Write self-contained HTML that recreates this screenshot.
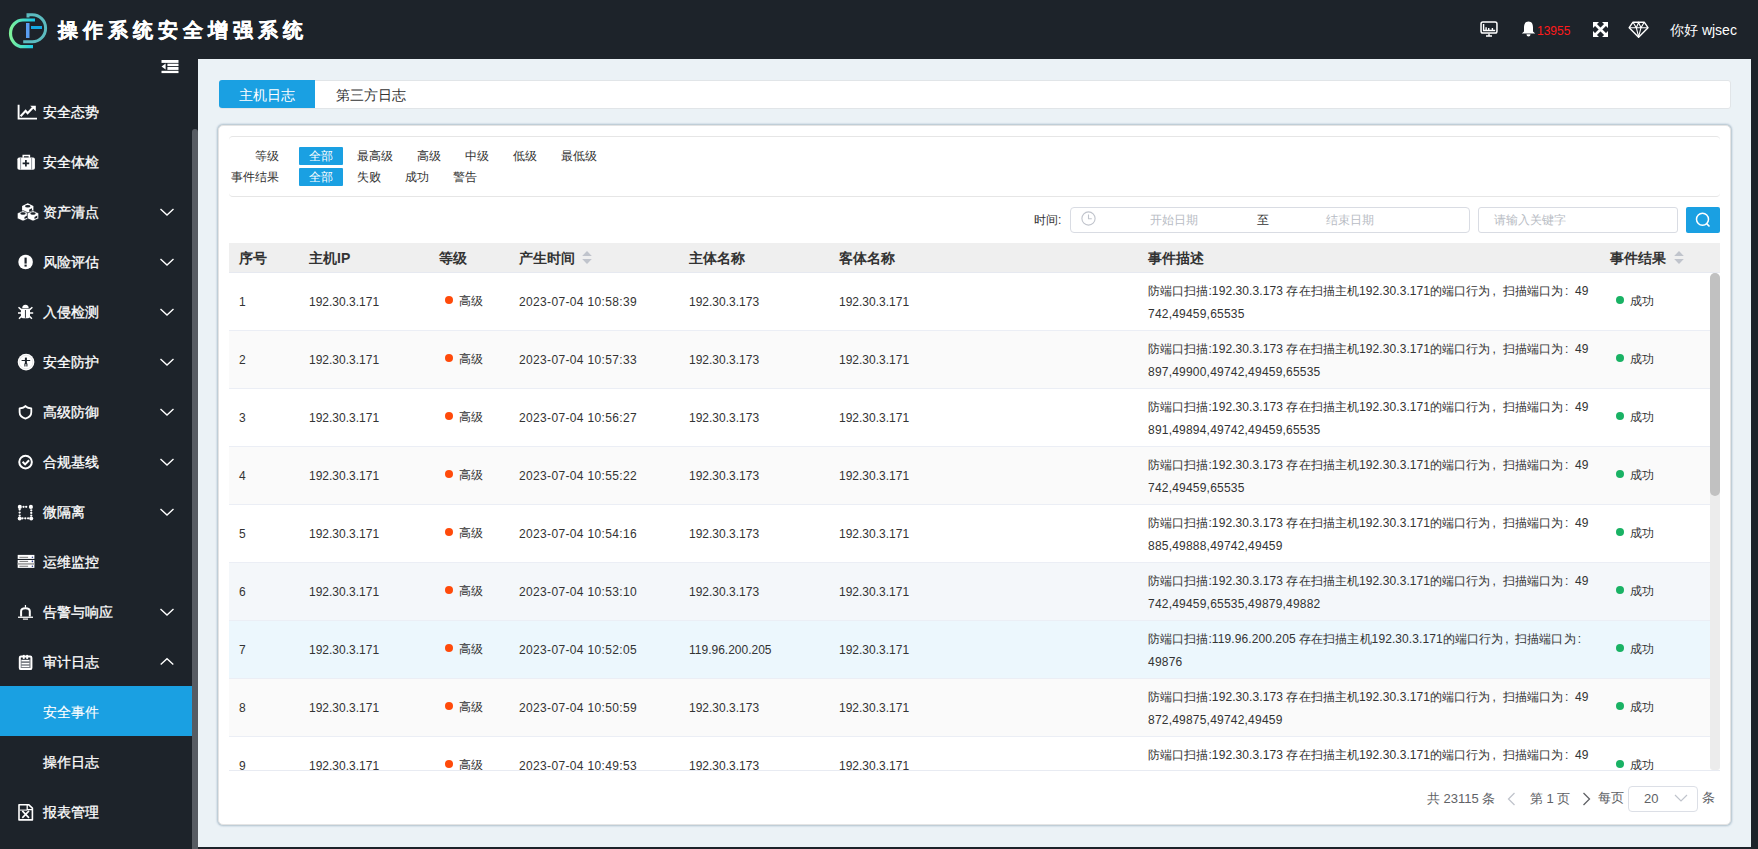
<!DOCTYPE html><html><head><meta charset="utf-8"><style>
*{box-sizing:border-box;margin:0;padding:0}
html,body{width:1758px;height:849px;overflow:hidden;background:#1d232a;font-family:"Liberation Sans",sans-serif;color:#333}
.abs{position:absolute}
#hdr{left:0;top:0;width:1758px;height:59px;background:#1d232a}
#title{left:58px;top:16px;font-size:20px;font-weight:bold;color:#fff;letter-spacing:5px;-webkit-text-stroke:0.35px #fff;white-space:nowrap;line-height:28px}
.hw{color:#fff;font-size:14px;white-space:nowrap}
#side{left:0;top:59px;width:192px;height:790px;background:#1d232a}
#sbar{left:192px;top:129px;width:6px;height:720px;background:#575c63;border-radius:3px 3px 0 0}
.mi{position:absolute;left:0;width:192px;height:50px;color:#fff;font-size:14px;line-height:50px;-webkit-text-stroke:0.3px #fff}
.mi .t{position:absolute;left:43px;top:1px}
.mi svg.ic{position:absolute;left:14px;top:13px}
.mi svg.ch{position:absolute;left:159px;top:21px;overflow:visible}
.mi.act{background:#1aa0e2;-webkit-text-stroke:0.12px #fff}
#content{left:198px;top:59px;width:1553px;height:788px;background:#ebf2f6}
#tabs{left:219px;top:80px;width:1512px;height:29px;background:#fff;border-radius:3px;box-shadow:0 0 0 1px #e1e5e8 inset}
#tab1{left:219px;top:80px;width:96px;height:28px;background:#1aa0e2;color:#fff;border-radius:3px 0 0 3px;font-size:14px;line-height:30px;text-align:center}
#tab2{left:336px;top:81px;font-size:14px;line-height:28px;color:#333}
#card{left:218px;top:125px;width:1513px;height:700px;background:#fff;border:1px solid #e4e4e4;border-radius:5px;box-shadow:0 0 0 1px #c0ced7,0 0 1px 2px rgba(205,218,228,.7)}
#filt{left:229px;top:136px;width:1491px;height:61px;border-top:1px solid #e6e6e6;border-bottom:1px solid #e6e6e6;border-radius:4px}
.fl{position:absolute;font-size:12px;line-height:18px;white-space:nowrap}
.fb{position:absolute;height:18px;padding:0 10px;font-size:12px;line-height:18px;color:#333;white-space:nowrap}
.fb.on{background:#1aa0e2;color:#fff;border-radius:1px}
.inp{position:absolute;border:1px solid #d9dce3;border-radius:4px;background:#fff}
.ph{position:absolute;font-size:12px;color:#b8bcc4;white-space:nowrap;line-height:16px}
#thead{left:229px;top:243px;width:1491px;height:30px;background:#efefef;box-shadow:inset 0 -1px 0 #e6e9f0}
.th{position:absolute;top:0;font-size:14px;font-weight:bold;line-height:30px;color:#333;white-space:nowrap}
#tbody{left:229px;top:273px;width:1481px;height:497px;overflow:hidden}
.row{position:absolute;left:0;width:1481px;height:58px;border-bottom:1px solid #ebeef5}
.td{position:absolute;font-size:12px;white-space:nowrap;color:#333}
.dot{position:absolute;width:8px;height:8px;border-radius:4px}
#vs{left:1710px;top:273px;width:10px;height:497px;background:#ececec;border-radius:5px 5px 3px 3px}
#tline{left:229px;top:770px;width:1491px;height:1px;background:#e8ebf2}
#vthumb{left:1710px;top:273px;width:10px;height:223px;background:#c1c1c1;border-radius:5px}
.pg{position:absolute;font-size:13px;color:#606266;white-space:nowrap;line-height:16px}

.fw{display:inline-block;width:12px;padding-left:2px}
.desc{letter-spacing:0.09px}
.dt{letter-spacing:0.35px}

.l2{letter-spacing:0.21px}
</style></head><body>
<div id="hdr" class="abs">
<svg class="abs" style="left:0;top:0" width="60" height="59" viewBox="0 0 60 59">
<defs><linearGradient id="lg" x1="0" y1="0" x2="1" y2="0"><stop offset="0" stop-color="#7ef29a"/><stop offset="1" stop-color="#15c8ee"/></linearGradient></defs>
<path d="M28 17.5V14.7H32.3A13.3 13.5 0 0 1 32.3 41.7H23.2" fill="none" stroke="#5cbcc0" stroke-width="3"/>
<path d="M35 20H23A12.5 13.35 0 0 0 23 46.7H33" fill="none" stroke="url(#lg)" stroke-width="3.2"/>
<rect x="26" y="23" width="3.5" height="15" fill="#5a9ef2"/>
<rect x="31" y="26" width="11" height="3" fill="#14a8e2"/>
</svg>
<div id="title" class="abs">操作系统安全增强系统</div>
<svg class="abs" style="left:1479px;top:20px" width="20" height="18" viewBox="0 0 20 18">
<rect x="2.05" y="2.05" width="15.9" height="11" rx="1.8" fill="none" stroke="#fff" stroke-width="1.5"/>
<path d="M4.6 4V10.5H16.2" fill="none" stroke="#fff" stroke-width="1.4"/><path d="M7.1 7.2V10.5M9.7 8V10.5M13.4 8.1V10.5" stroke="#fff" stroke-width="1.4"/>
<path d="M10 13.5V15.5M7 16H13" stroke="#fff" stroke-width="1.4"/></svg>
<svg class="abs" style="left:1521px;top:21px" width="15" height="16" viewBox="0 0 15 16">
<path d="M7.5 0.6C4 0.6 3 3.5 3 6.5V10.5L0.8 12.6H14.2L12 10.5V6.5C12 3.5 11 0.6 7.5 0.6Z" fill="#fff"/><path d="M5.5 13.2A2 2.2 0 0 0 9.5 13.2Z" fill="#fff"/></svg>
<div class="abs" style="left:1537px;top:23px;font-size:12px;color:#ff1a1a;line-height:16px">13955</div>
<svg class="abs" style="left:1592px;top:21px" width="17" height="17" viewBox="0 0 17 17">
<path d="M2.5 2.5L14.5 14.5M14.5 2.5L2.5 14.5" stroke="#fff" stroke-width="2.6"/>
<path d="M1 1H7L1 7Z M16 1H10L16 7Z M1 16H7L1 10Z M16 16H10L16 10Z" fill="#fff"/></svg>
<svg class="abs" style="left:1628px;top:21px" width="21" height="17" viewBox="0 0 21 17">
<path d="M5 1.2H16.2L20 6.7L10.6 16.2L1.2 6.7Z" fill="none" stroke="#fff" stroke-width="1.4" stroke-linejoin="round"/>
<path d="M1.2 6.7H20M5 1.2L8.3 6.7L10.6 1.5L13 6.7L16.2 1.2M8.3 6.7L10.6 15.8L13 6.7" fill="none" stroke="#fff" stroke-width="1.1"/></svg>
<div class="abs hw" style="left:1670px;top:21px;line-height:18px">你好 wjsec</div>
</div>
<div id="side" class="abs">
<svg class="abs" style="left:161px;top:1px" width="18" height="14" viewBox="0 0 18 14">
<rect x="0.5" y="0" width="17" height="2.9" fill="#fff"/><rect x="0.5" y="10.8" width="17" height="2.3" fill="#fff"/>
<rect x="6.4" y="3.7" width="11.1" height="2.4" fill="#fff"/><rect x="6.4" y="7" width="11.1" height="2.9" fill="#fff"/>
<path d="M0.5 6.6L4.6 3.6V9.6Z" fill="#fff"/></svg>
<div class="mi" style="top:27px"><svg class="ic" width="28" height="24" viewBox="0 0 28 24"><path d="M4.6 5.8V19.6H23" fill="none" stroke="#fff" stroke-width="1.9"/><path d="M6.6 17.2L11.6 11.8L13.6 14.2L18.8 8.8" fill="none" stroke="#fff" stroke-width="2.1"/><path d="M16.2 6.8H21.8V12.2Z" fill="#fff"/></svg><span class="t">安全态势</span></div>
<div class="mi" style="top:77px"><svg class="ic" width="28" height="24" viewBox="0 0 28 24"><path d="M9.2 8.8V6.6H15.4V8.8" fill="none" stroke="#fff" stroke-width="1.5"/><rect x="3.4" y="8.5" width="17.5" height="12.2" rx="1.8" fill="#fff"/><rect x="6.2" y="8.5" width="0.9" height="12.2" fill="#8a9097"/><rect x="17.2" y="8.5" width="0.9" height="12.2" fill="#8a9097"/><path d="M11.9 11V17.6M8.6 14.3H15.2" stroke="#1d232a" stroke-width="1.7"/></svg><span class="t">安全体检</span></div>
<div class="mi" style="top:127px"><svg class="ic" width="28" height="24" viewBox="0 0 28 24"><path d="M13.75 4.3L19.4 6.9V12.3L13.75 14.9L8.1 12.3V6.9Z" fill="#fff"/><ellipse cx="13.75" cy="7.2" rx="2.7" ry="1.25" fill="#1d232a"/><path d="M15.2 10.6L18 9.3V11.5L15.2 12.8Z" fill="#1d232a"/><path d="M9 11.6L14.7 14.2V19.5L9 22.1L3.3 19.5V14.2Z" fill="#fff" stroke="#1d232a" stroke-width="0.7"/><path d="M19 11.6L24.7 14.2V19.5L19 22.1L13.3 19.5V14.2Z" fill="#fff" stroke="#1d232a" stroke-width="0.7"/><ellipse cx="9" cy="14.5" rx="2.7" ry="1.25" fill="#1d232a"/><path d="M10.5 17.9L13.3 16.6V18.8L10.5 20.1Z" fill="#1d232a"/><ellipse cx="19" cy="14.5" rx="2.7" ry="1.25" fill="#1d232a"/><path d="M20.5 17.9L23.3 16.6V18.8L20.5 20.1Z" fill="#1d232a"/></svg><span class="t">资产清点</span><svg class="ch" width="15" height="9" viewBox="0 0 15 9"><path d="M1.5 2 L8 8 L14.5 2" fill="none" stroke="#fff" stroke-width="1.4"/></svg></div>
<div class="mi" style="top:177px"><svg class="ic" width="28" height="24" viewBox="0 0 28 24"><circle cx="11.6" cy="13" r="7.3" fill="#fff"/><path d="M11.6 8.6V14.6" stroke="#1d232a" stroke-width="2.2"/><rect x="10.5" y="15.6" width="2.2" height="2" fill="#1d232a"/></svg><span class="t">风险评估</span><svg class="ch" width="15" height="9" viewBox="0 0 15 9"><path d="M1.5 2 L8 8 L14.5 2" fill="none" stroke="#fff" stroke-width="1.4"/></svg></div>
<div class="mi" style="top:227px"><svg class="ic" width="28" height="24" viewBox="0 0 28 24"><path d="M8.2 9.3A3.25 3.6 0 0 1 14.7 9.3Z" fill="#fff"/><path d="M6.9 9.8H16V17.2Q16 19.2 14 19.2H8.9Q6.9 19.2 6.9 17.2Z" fill="#fff"/><path d="M11.45 11V18.8" stroke="#1d232a" stroke-width="0.9"/><path d="M4.5 8.2L7.2 10.6M18.4 8.2L15.7 10.6M4 13.9H7.2M19.2 13.9H15.7M5 19.8L7.2 17.4M17.9 19.8L15.7 17.4" stroke="#fff" stroke-width="1.5"/></svg><span class="t">入侵检测</span><svg class="ch" width="15" height="9" viewBox="0 0 15 9"><path d="M1.5 2 L8 8 L14.5 2" fill="none" stroke="#fff" stroke-width="1.4"/></svg></div>
<div class="mi" style="top:277px"><svg class="ic" width="28" height="24" viewBox="0 0 28 24"><circle cx="12.05" cy="13.05" r="8.35" fill="#fff"/><circle cx="12.05" cy="13.05" r="6.8" fill="none" stroke="#d8d8d8" stroke-width="0.6"/><path d="M7.6 11.5H16.2" stroke="#1d232a" stroke-width="1"/><rect x="10.9" y="8.6" width="2" height="6.4" fill="#1d232a"/><path d="M10.9 14.5V17.6M12.9 14.5V17.6" stroke="#1d232a" stroke-width="1.1"/></svg><span class="t">安全防护</span><svg class="ch" width="15" height="9" viewBox="0 0 15 9"><path d="M1.5 2 L8 8 L14.5 2" fill="none" stroke="#fff" stroke-width="1.4"/></svg></div>
<div class="mi" style="top:327px"><svg class="ic" width="28" height="24" viewBox="0 0 28 24"><path d="M11.45 7Q12.8 9 17.3 9.4V13.2C17.3 16.6 14.8 18.6 11.45 19.6C8.1 18.6 5.6 16.6 5.6 13.2V9.4Q10.1 9 11.45 7Z" fill="none" stroke="#fff" stroke-width="1.8" stroke-linejoin="round"/></svg><span class="t">高级防御</span><svg class="ch" width="15" height="9" viewBox="0 0 15 9"><path d="M1.5 2 L8 8 L14.5 2" fill="none" stroke="#fff" stroke-width="1.4"/></svg></div>
<div class="mi" style="top:377px"><svg class="ic" width="28" height="24" viewBox="0 0 28 24"><circle cx="11.55" cy="13.1" r="6.3" fill="none" stroke="#fff" stroke-width="2"/><path d="M8.6 12.8L11.1 15.4L15.1 11.2" fill="none" stroke="#fff" stroke-width="2"/></svg><span class="t">合规基线</span><svg class="ch" width="15" height="9" viewBox="0 0 15 9"><path d="M1.5 2 L8 8 L14.5 2" fill="none" stroke="#fff" stroke-width="1.4"/></svg></div>
<div class="mi" style="top:427px"><svg class="ic" width="28" height="24" viewBox="0 0 28 24"><circle cx="5.8" cy="7.9" r="2.05" fill="#fff"/><circle cx="16.9" cy="7.9" r="2.05" fill="#fff"/><circle cx="5.7" cy="19.4" r="2" fill="#fff"/><circle cx="17.2" cy="19.4" r="2" fill="#fff"/><g fill="#fff"><circle cx="9.5" cy="7.8" r="1.15"/><circle cx="12.2" cy="7.8" r="1.15"/><circle cx="17.25" cy="11.3" r="1.15"/><circle cx="17.25" cy="13.9" r="1.15"/><circle cx="17.25" cy="16.6" r="1.15"/><circle cx="8.5" cy="19.3" r="1.15"/><circle cx="11.3" cy="19.3" r="1.15"/><circle cx="14.1" cy="19.3" r="1.15"/><circle cx="5.65" cy="10.6" r="1.15"/><circle cx="5.65" cy="13.6" r="1.15"/><circle cx="5.65" cy="16.6" r="1.15"/></g></svg><span class="t">微隔离</span><svg class="ch" width="15" height="9" viewBox="0 0 15 9"><path d="M1.5 2 L8 8 L14.5 2" fill="none" stroke="#fff" stroke-width="1.4"/></svg></div>
<div class="mi" style="top:477px"><svg class="ic" width="28" height="24" viewBox="0 0 28 24"><rect x="3.7" y="5.9" width="16.7" height="4" fill="#fff"/><rect x="3.7" y="11" width="16.7" height="7.9" fill="#fff"/><rect x="3.7" y="13.9" width="16.7" height="1.9" fill="#aaa"/><g stroke="#777" stroke-width="1"><path d="M5.4 8.3H14.1M5.4 12.4H14.1M5.4 17.25H14.1"/></g><g fill="#2a3a8a"><circle cx="18.4" cy="8.3" r="0.8"/><circle cx="18.4" cy="12.4" r="0.8"/><circle cx="18.4" cy="17.25" r="0.8"/></g></svg><span class="t">运维监控</span></div>
<div class="mi" style="top:527px"><svg class="ic" width="28" height="24" viewBox="0 0 28 24"><path d="M11.45 6V8.6" stroke="#fff" stroke-width="1.2"/><path d="M7.1 17.6V12.2Q7.1 9.2 11.45 9.2Q15.8 9.2 15.8 12.2V17.6" fill="none" stroke="#fff" stroke-width="2"/><rect x="4" y="17.6" width="15" height="1.3" fill="#fff"/><rect x="8.9" y="19.4" width="5.1" height="1.5" fill="#ccc"/></svg><span class="t">告警与响应</span><svg class="ch" width="15" height="9" viewBox="0 0 15 9"><path d="M1.5 2 L8 8 L14.5 2" fill="none" stroke="#fff" stroke-width="1.4"/></svg></div>
<div class="mi" style="top:577px"><svg class="ic" width="28" height="24" viewBox="0 0 28 24"><rect x="6.6" y="10.5" width="9.8" height="8.7" fill="#7d8187"/><rect x="5.8" y="7.5" width="11.6" height="12.6" rx="1.2" fill="none" stroke="#fff" stroke-width="2"/><path d="M7.6 11.6H15.3M7.6 14.6H15.3M7.6 17.4H15.3" stroke="#fff" stroke-width="1.2"/><rect x="8.8" y="5.9" width="1.9" height="4" fill="#fff"/><rect x="12.2" y="5.9" width="1.9" height="4" fill="#fff"/></svg><span class="t">审计日志</span><svg class="ch" width="15" height="9" viewBox="0 0 15 9"><path d="M1.7 7.4 L8 1.8 L14.3 7.4" fill="none" stroke="#fff" stroke-width="1.4"/></svg></div>
<div class="mi act" style="top:627px"><span class="t">安全事件</span></div>
<div class="mi" style="top:677px"><span class="t">操作日志</span></div>
<div class="mi" style="top:727px"><svg class="ic" width="28" height="24" viewBox="0 0 28 24"><path d="M5 5.7H14.6L18.4 9.2V20.9H5Z" fill="none" stroke="#fff" stroke-width="1.6" stroke-linejoin="round"/><path d="M13.2 6V10.6H18" fill="none" stroke="#fff" stroke-width="1.3"/><path d="M6 11.1H13.2" stroke="#fff" stroke-width="1"/><path d="M8.3 11.9L15 18.9M15 11.9L8.3 18.9" stroke="#fff" stroke-width="1.6"/></svg><span class="t">报表管理</span></div>
</div>
<div id="sbar" class="abs"></div>
<div id="content" class="abs"></div>
<div id="tabs" class="abs"></div><div id="tab1" class="abs">主机日志</div><div id="tab2" class="abs">第三方日志</div>
<div id="card" class="abs"></div>
<div id="filt" class="abs"></div>
<div class="fl" style="left:255px;top:147px">等级</div>
<div class="fl" style="left:231px;top:168px">事件结果</div>
<div class="fb on" style="left:299px;top:147px">全部</div>
<div class="fb" style="left:347px;top:147px">最高级</div>
<div class="fb" style="left:407px;top:147px">高级</div>
<div class="fb" style="left:455px;top:147px">中级</div>
<div class="fb" style="left:503px;top:147px">低级</div>
<div class="fb" style="left:551px;top:147px">最低级</div>
<div class="fb on" style="left:299px;top:168px">全部</div>
<div class="fb" style="left:347px;top:168px">失败</div>
<div class="fb" style="left:395px;top:168px">成功</div>
<div class="fb" style="left:443px;top:168px">警告</div>
<div class="fl" style="left:1034px;top:211px">时间:</div>
<div class="inp" style="left:1070px;top:207px;width:400px;height:26px"></div>
<svg class="abs" style="left:1081px;top:211px" width="15" height="15" viewBox="0 0 15 15"><circle cx="7.5" cy="7.5" r="6.6" fill="none" stroke="#c0c4cc" stroke-width="1.1"/><path d="M7.5 3.5V7.8H10.8" fill="none" stroke="#c0c4cc" stroke-width="1.1"/></svg>
<div class="ph" style="left:1150px;top:212px">开始日期</div>
<div class="fl" style="left:1257px;top:211px;color:#333">至</div>
<div class="ph" style="left:1326px;top:212px">结束日期</div>
<div class="inp" style="left:1478px;top:207px;width:200px;height:26px;border-radius:3px"></div>
<div class="ph" style="left:1494px;top:212px">请输入关键字</div>
<div class="abs" style="left:1686px;top:207px;width:34px;height:26px;background:#1aa0e2;border-radius:2px"></div>
<svg class="abs" style="left:1695px;top:212px" width="17" height="16" viewBox="0 0 17 16"><circle cx="7.5" cy="7.3" r="6" fill="none" stroke="#fff" stroke-width="1.5"/><path d="M11.6 11.6L14.5 14.5" stroke="#fff" stroke-width="1.6"/></svg>
<div id="thead" class="abs">
<div class="th" style="left:10px">序号</div>
<div class="th" style="left:80px">主机IP</div>
<div class="th" style="left:210px">等级</div>
<div class="th" style="left:290px">产生时间</div>
<div class="th" style="left:460px">主体名称</div>
<div class="th" style="left:610px">客体名称</div>
<div class="th" style="left:919px">事件描述</div>
<div class="th" style="left:1381px">事件结果</div>
<svg style="position:absolute;left:353px;top:7px" width="10" height="16" viewBox="0 0 10 16"><path d="M5 1L9.8 6H0.2Z" fill="#c0c4cc"/><path d="M5 14L9.8 9H0.2Z" fill="#c0c4cc"/></svg>
<svg style="position:absolute;left:1445px;top:7px" width="10" height="16" viewBox="0 0 10 16"><path d="M5 1L9.8 6H0.2Z" fill="#c0c4cc"/><path d="M5 14L9.8 9H0.2Z" fill="#c0c4cc"/></svg>
</div>
<div id="tbody" class="abs">
<div class="row" style="top:0px;background:#fff"><div class="td" style="left:10px;top:22px">1</div><div class="td" style="left:80px;top:22px">192.30.3.171</div><div class="dot" style="left:216px;top:23px;background:#ff4a0a"></div><div class="td" style="left:230px;top:20px">高级</div><div class="td dt" style="left:290px;top:22px">2023-07-04 10:58:39</div><div class="td" style="left:460px;top:22px">192.30.3.173</div><div class="td" style="left:610px;top:22px">192.30.3.171</div><div class="td desc" style="left:919px;top:7px;line-height:23px">防端口扫描:192.30.3.173 存在扫描主机192.30.3.171的端口行为<span class="fw">,</span>扫描端口为<span class="fw">:</span>49<br><span class="l2">742,49459,65535</span></div><div class="dot" style="left:1387px;top:23px;background:#19b264"></div><div class="td" style="left:1401px;top:20px">成功</div></div>
<div class="row" style="top:58px;background:#fafafa"><div class="td" style="left:10px;top:22px">2</div><div class="td" style="left:80px;top:22px">192.30.3.171</div><div class="dot" style="left:216px;top:23px;background:#ff4a0a"></div><div class="td" style="left:230px;top:20px">高级</div><div class="td dt" style="left:290px;top:22px">2023-07-04 10:57:33</div><div class="td" style="left:460px;top:22px">192.30.3.173</div><div class="td" style="left:610px;top:22px">192.30.3.171</div><div class="td desc" style="left:919px;top:7px;line-height:23px">防端口扫描:192.30.3.173 存在扫描主机192.30.3.171的端口行为<span class="fw">,</span>扫描端口为<span class="fw">:</span>49<br><span class="l2">897,49900,49742,49459,65535</span></div><div class="dot" style="left:1387px;top:23px;background:#19b264"></div><div class="td" style="left:1401px;top:20px">成功</div></div>
<div class="row" style="top:116px;background:#fff"><div class="td" style="left:10px;top:22px">3</div><div class="td" style="left:80px;top:22px">192.30.3.171</div><div class="dot" style="left:216px;top:23px;background:#ff4a0a"></div><div class="td" style="left:230px;top:20px">高级</div><div class="td dt" style="left:290px;top:22px">2023-07-04 10:56:27</div><div class="td" style="left:460px;top:22px">192.30.3.173</div><div class="td" style="left:610px;top:22px">192.30.3.171</div><div class="td desc" style="left:919px;top:7px;line-height:23px">防端口扫描:192.30.3.173 存在扫描主机192.30.3.171的端口行为<span class="fw">,</span>扫描端口为<span class="fw">:</span>49<br><span class="l2">891,49894,49742,49459,65535</span></div><div class="dot" style="left:1387px;top:23px;background:#19b264"></div><div class="td" style="left:1401px;top:20px">成功</div></div>
<div class="row" style="top:174px;background:#fafafa"><div class="td" style="left:10px;top:22px">4</div><div class="td" style="left:80px;top:22px">192.30.3.171</div><div class="dot" style="left:216px;top:23px;background:#ff4a0a"></div><div class="td" style="left:230px;top:20px">高级</div><div class="td dt" style="left:290px;top:22px">2023-07-04 10:55:22</div><div class="td" style="left:460px;top:22px">192.30.3.173</div><div class="td" style="left:610px;top:22px">192.30.3.171</div><div class="td desc" style="left:919px;top:7px;line-height:23px">防端口扫描:192.30.3.173 存在扫描主机192.30.3.171的端口行为<span class="fw">,</span>扫描端口为<span class="fw">:</span>49<br><span class="l2">742,49459,65535</span></div><div class="dot" style="left:1387px;top:23px;background:#19b264"></div><div class="td" style="left:1401px;top:20px">成功</div></div>
<div class="row" style="top:232px;background:#fff"><div class="td" style="left:10px;top:22px">5</div><div class="td" style="left:80px;top:22px">192.30.3.171</div><div class="dot" style="left:216px;top:23px;background:#ff4a0a"></div><div class="td" style="left:230px;top:20px">高级</div><div class="td dt" style="left:290px;top:22px">2023-07-04 10:54:16</div><div class="td" style="left:460px;top:22px">192.30.3.173</div><div class="td" style="left:610px;top:22px">192.30.3.171</div><div class="td desc" style="left:919px;top:7px;line-height:23px">防端口扫描:192.30.3.173 存在扫描主机192.30.3.171的端口行为<span class="fw">,</span>扫描端口为<span class="fw">:</span>49<br><span class="l2">885,49888,49742,49459</span></div><div class="dot" style="left:1387px;top:23px;background:#19b264"></div><div class="td" style="left:1401px;top:20px">成功</div></div>
<div class="row" style="top:290px;background:#f4f7fa"><div class="td" style="left:10px;top:22px">6</div><div class="td" style="left:80px;top:22px">192.30.3.171</div><div class="dot" style="left:216px;top:23px;background:#ff4a0a"></div><div class="td" style="left:230px;top:20px">高级</div><div class="td dt" style="left:290px;top:22px">2023-07-04 10:53:10</div><div class="td" style="left:460px;top:22px">192.30.3.173</div><div class="td" style="left:610px;top:22px">192.30.3.171</div><div class="td desc" style="left:919px;top:7px;line-height:23px">防端口扫描:192.30.3.173 存在扫描主机192.30.3.171的端口行为<span class="fw">,</span>扫描端口为<span class="fw">:</span>49<br><span class="l2">742,49459,65535,49879,49882</span></div><div class="dot" style="left:1387px;top:23px;background:#19b264"></div><div class="td" style="left:1401px;top:20px">成功</div></div>
<div class="row" style="top:348px;background:#ecf7fd"><div class="td" style="left:10px;top:22px">7</div><div class="td" style="left:80px;top:22px">192.30.3.171</div><div class="dot" style="left:216px;top:23px;background:#ff4a0a"></div><div class="td" style="left:230px;top:20px">高级</div><div class="td dt" style="left:290px;top:22px">2023-07-04 10:52:05</div><div class="td" style="left:460px;top:22px">119.96.200.205</div><div class="td" style="left:610px;top:22px">192.30.3.171</div><div class="td desc" style="left:919px;top:7px;line-height:23px">防端口扫描:119.96.200.205 存在扫描主机192.30.3.171的端口行为<span class="fw">,</span>扫描端口为<span class="fw">:</span><br><span class="l2">49876</span></div><div class="dot" style="left:1387px;top:23px;background:#19b264"></div><div class="td" style="left:1401px;top:20px">成功</div></div>
<div class="row" style="top:406px;background:#fafafa"><div class="td" style="left:10px;top:22px">8</div><div class="td" style="left:80px;top:22px">192.30.3.171</div><div class="dot" style="left:216px;top:23px;background:#ff4a0a"></div><div class="td" style="left:230px;top:20px">高级</div><div class="td dt" style="left:290px;top:22px">2023-07-04 10:50:59</div><div class="td" style="left:460px;top:22px">192.30.3.173</div><div class="td" style="left:610px;top:22px">192.30.3.171</div><div class="td desc" style="left:919px;top:7px;line-height:23px">防端口扫描:192.30.3.173 存在扫描主机192.30.3.171的端口行为<span class="fw">,</span>扫描端口为<span class="fw">:</span>49<br><span class="l2">872,49875,49742,49459</span></div><div class="dot" style="left:1387px;top:23px;background:#19b264"></div><div class="td" style="left:1401px;top:20px">成功</div></div>
<div class="row" style="top:464px;background:#fff"><div class="td" style="left:10px;top:22px">9</div><div class="td" style="left:80px;top:22px">192.30.3.171</div><div class="dot" style="left:216px;top:23px;background:#ff4a0a"></div><div class="td" style="left:230px;top:20px">高级</div><div class="td dt" style="left:290px;top:22px">2023-07-04 10:49:53</div><div class="td" style="left:460px;top:22px">192.30.3.173</div><div class="td" style="left:610px;top:22px">192.30.3.171</div><div class="td desc" style="left:919px;top:7px;line-height:23px">防端口扫描:192.30.3.173 存在扫描主机192.30.3.171的端口行为<span class="fw">,</span>扫描端口为<span class="fw">:</span>49<br><span class="l2">845,49848,49742,49459</span></div><div class="dot" style="left:1387px;top:23px;background:#19b264"></div><div class="td" style="left:1401px;top:20px">成功</div></div>
</div>
<div id="vs" class="abs"></div><div id="vthumb" class="abs"></div><div id="tline" class="abs"></div>
<div class="pg" style="left:1427px;top:791px">共 23115 条</div>
<svg class="abs" style="left:1507px;top:792px" width="9" height="14" viewBox="0 0 9 14"><path d="M7.5 1L1.5 7L7.5 13" fill="none" stroke="#c0c4cc" stroke-width="1.3"/></svg>
<div class="pg" style="left:1530px;top:791px">第 1 页</div>
<svg class="abs" style="left:1582px;top:792px" width="9" height="14" viewBox="0 0 9 14"><path d="M1.5 1L7.5 7L1.5 13" fill="none" stroke="#606266" stroke-width="1.3"/></svg>
<div class="pg" style="left:1598px;top:790px">每页</div>
<div class="inp" style="left:1628px;top:786px;width:70px;height:26px;border-color:#dcdfe6"></div>
<div class="pg" style="left:1644px;top:791px">20</div>
<svg class="abs" style="left:1674px;top:794px" width="14" height="8" viewBox="0 0 14 8"><path d="M1 1L7 7L13 1" fill="none" stroke="#c0c4cc" stroke-width="1.2"/></svg>
<div class="pg" style="left:1702px;top:790px">条</div>
</body></html>
